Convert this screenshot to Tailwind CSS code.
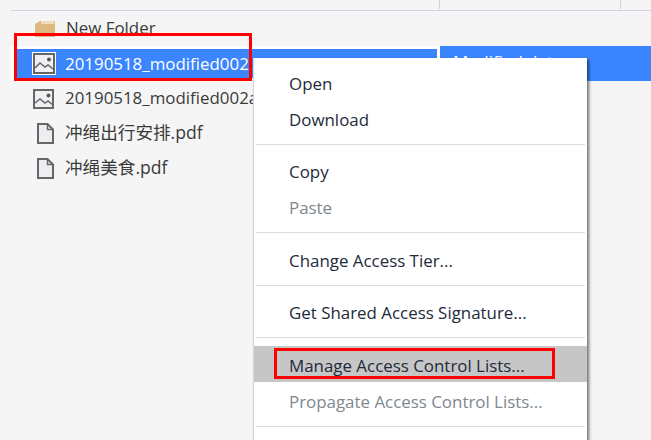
<!DOCTYPE html>
<html lang="en">
<head>
<meta charset="UTF-8">
<script src="https://cdn.jsdelivr.net/npm/@tailwindcss/browser@4"></script>
<title>Storage Explorer</title>
</head>
<body class="w-[651px] h-[440px] overflow-hidden relative bg-[#f5f5f5] text-[16.9px] text-[#3b3b3b] font-['Open_Sans','Noto_Sans_CJK_SC',sans-serif]">

  <!-- table header -->
  <div class="ml-[11px] h-[11px] border-b border-[#d3d1e2] flex">
    <div class="w-[429px] h-[9px] border-r border-[#d3d1e2]"></div>
    <div class="w-[181px] h-[9px] border-r border-[#d3d1e2]"></div>
  </div>

  <!-- rows -->
  <div>
    <div class="h-[35px] flex items-center pl-[35px] gap-[11px]">
      <svg class="w-[20px] h-[17px]" viewBox="0 0 20 17"><path d="M0 4 L5 1 H20 V17 H0 Z" fill="#deb97f"/><path d="M6 1 H19 V4 H6 Z" fill="#efdcbc"/></svg>
      <span class="leading-none">New Folder</span>
    </div>
    <div class="h-[35px] flex">
      <div class="w-[429px] ml-[11px] flex items-center bg-[#3b85ff] text-white pl-[17px] gap-[9px] border-[3px] border-l-[4px] border-white">
        <svg class="w-[24px] h-[23px] shrink-0" viewBox="0 0 24 23" fill="none"><rect x="0.5" y="0.5" width="23" height="22" fill="#dfe7f4" stroke="#ffffff"/><rect x="2" y="2" width="20" height="19" fill="#f0f0f4" stroke="#666666" stroke-width="2"/><circle cx="17" cy="7.5" r="2" fill="#555555"/><path d="M3 16 L8 11 L13 15 L16 13 L21 17" stroke="#666666" stroke-width="1.5"/></svg>
        <span class="whitespace-nowrap">20190518_modified002.tif</span>
      </div>
      <div class="flex-1 bg-[#3b85ff] text-white pl-[13px] pt-[3px]">Modified date</div>
    </div>
    <div class="h-[35px] flex items-center pl-[33px] gap-[11px]">
      <svg class="w-[21px] h-[20px] shrink-0" viewBox="0 0 21 20" fill="none"><rect x="1" y="1" width="19" height="18" fill="#f0f0f4" stroke="#666666" stroke-width="2"/><circle cx="15.5" cy="6.5" r="2" fill="#555555"/><path d="M2 14 L7 10 L12 14 L15 12 L20 16" stroke="#666666" stroke-width="1.5"/></svg>
      <span class="whitespace-nowrap pb-[2px]">20190518_modified002a.tif</span>
    </div>
    <div class="h-[35px] flex items-center pl-[37px] gap-[11px]">
      <svg class="w-[17px] h-[21px] shrink-0" viewBox="0 0 17 21" fill="none"><path d="M1 1 H10.5 L16 6.5 V20 H1 Z" fill="#eeeef2" stroke="#666666" stroke-width="2"/><path d="M10.5 1 V6.5 H16" stroke="#666666" stroke-width="1.5"/></svg>
      <span class="text-[17.6px] pb-[2px]">冲绳出行安排.pdf</span>
    </div>
    <div class="h-[35px] flex items-center pl-[37px] gap-[11px]">
      <svg class="w-[17px] h-[21px] shrink-0" viewBox="0 0 17 21" fill="none"><path d="M1 1 H10.5 L16 6.5 V20 H1 Z" fill="#eeeef2" stroke="#666666" stroke-width="2"/><path d="M10.5 1 V6.5 H16" stroke="#666666" stroke-width="1.5"/></svg>
      <span class="text-[17.6px] pb-[2px]">冲绳美食.pdf</span>
    </div>
  </div>

  <!-- context menu -->
  <div class="absolute left-[253px] top-[58px] w-[334px] h-[382px] overflow-hidden bg-white border-l border-[#d8d8d8] shadow-[2px_2px_3px_rgba(0,0,0,0.55)] text-[#222b3a] pt-[8px]">
    <div class="h-[36px] flex items-center pl-[35px]">Open</div>
    <div class="h-[36px] flex items-center pl-[35px]">Download</div>
    <div class="h-px bg-[#dcdcdc] mx-[2px] mt-[6px] mb-[9px]"></div>
    <div class="h-[36px] flex items-center pl-[35px]">Copy</div>
    <div class="h-[36px] flex items-center pl-[35px] text-[#7f8791]">Paste</div>
    <div class="h-px bg-[#dcdcdc] mx-[2px] mt-[6px] mb-[10px]"></div>
    <div class="h-[36px] flex items-center pl-[35px]">Change Access Tier...</div>
    <div class="h-px bg-[#dcdcdc] mx-[2px] mt-[6px] mb-[9px]"></div>
    <div class="h-[36px] flex items-center pl-[35px]">Get Shared Access Signature...</div>
    <div class="h-px bg-[#dcdcdc] mx-[2px] mt-[6px] mb-[8px]"></div>
    <div class="h-[36px] flex items-center pl-[35px] pt-[4px] bg-[#c6c6c6]">Manage Access Control Lists...</div>
    <div class="h-[36px] mt-[2px] flex items-center pl-[35px] text-[#7f8791]">Propagate Access Control Lists...</div>
    <div class="h-px bg-[#dcdcdc] mx-[2px] mt-[6px]"></div>
  </div>

  <!-- red annotation boxes -->
  <div class="absolute left-[14px] top-[33px] w-[238px] h-[48px] border-[3px] border-[#ff0000]"></div>
  <div class="absolute left-[274px] top-[348px] w-[281px] h-[31px] border-[3px] border-[#ff0000]"></div>
</body>
</html>
